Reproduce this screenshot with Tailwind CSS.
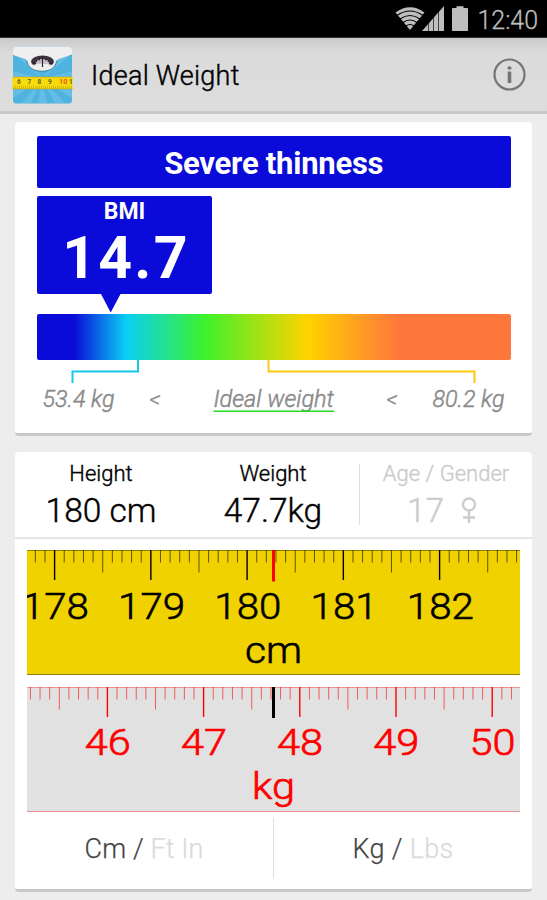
<!DOCTYPE html>
<html lang="en">
<head>
  <meta charset="UTF-8">
  <title>Ideal Weight</title>
  <meta name="viewport" content="width=device-width, initial-scale=1.0">
  <script src="https://cdn.jsdelivr.net/npm/@tailwindcss/browser@4"></script>
</head>
<body class="bg-[#ededed] font-['Roboto',sans-serif] w-[547px] h-[900px] overflow-hidden text-black">

  <!-- Status bar -->
  <div class="h-[38px] bg-black border-b border-[#333] flex justify-end">
    <svg class="w-[167px] h-[37px]" viewBox="0 0 167 37" fill="#bebebe">
      <path d="M15.500 12.500 Q30 2 44.500 12.500 L30 30 Z"/>
      <g fill="none" stroke="#000" stroke-width="1.200">
        <path d="M17 15.500Q30 6.500 43 15.500"/>
        <path d="M20 19Q30 12 40 19"/>
        <path d="M23 22.500Q30 17.500 37 22.500"/>
        <path d="M26 26Q30 23 34 26"/>
      </g>
      <path d="M42 31L64 6V31Z"/>
      <path d="M48.500 20V31M53.500 15V31M58.500 10V31" stroke="#000" stroke-width="1" opacity=".65"/>
      <path d="M72 9Q72 8 73 8H76.500V6.300H83.500V8H87Q88 8 88 9V31H72Z"/>
      <text x="97.500" y="28.500" font-size="25.500" font-weight="300" stroke="#bebebe" stroke-width=".3" textLength="60.500" lengthAdjust="spacingAndGlyphs">12:40</text>
    </svg>
  </div>

  <!-- Action bar -->
  <header class="h-[76px] bg-linear-to-b from-[#cacaca] via-[#dbdbdb] via-20% to-[#dddddd] border-b-3 border-[#c8c8c8] flex items-center justify-between pl-3 pr-[21px]">
    <div class="flex items-center">
      <svg class="w-[61px] h-[58px] mt-px" viewBox="0 0 61 58">
        <rect x="1" y=".5" width="59" height="57" rx="3.500" fill="#4fb3df"/>
        <g fill="#70c3e8" opacity=".65">
          <path d="M30 33L1 25V34ZM30 33L1 43V52ZM30 33L10 57H19ZM30 33L26 57H35ZM30 33L43 57H53ZM30 33L60 43V52ZM30 33L60 25V34ZM30 33L5 10H14ZM30 33L48 10H57Z"/>
        </g>
        <path d="M1 9Q12 9 15 15C15.500 21 21 25.200 30 25.200C39 25.200 44 21 44.500 15Q48 9 60 8.500" fill="#efefef" stroke="#30799b" stroke-width=".9"/>
        <path d="M1 9V4Q1 .5 4.500 .5H56.500Q60 .5 60 4V8.500L44 14H16Z" fill="#efefef"/>
        <path d="M1 9Q12 9 15 15L17 12ZM60 8.500Q48 9 44.500 15L43 12Z" fill="#efefef"/>
        <ellipse cx="30.500" cy="15.500" rx="11.500" ry="6" fill="#3d3640"/>
        <path d="M21 18Q30 8 40 18L38 20Q30 14 23 20Z" fill="#c8bfc8"/>
        <path d="M21 20Q30 14 40 20L37 23H24Z" fill="#eee"/>
        <path d="M30.500 10V21M25 16L23.500 13.500M36 16L37.500 13.500M27.500 14.500L27 12M33.500 14.500L34 12" stroke="#2b2430" stroke-width="1.200"/>
        <circle cx="22.500" cy="17" r="1.600" fill="#2b2430"/><circle cx="38.500" cy="17" r="1.600" fill="#2b2430"/>
        <rect x=".5" y="31" width="60" height="12" fill="#f7dc0d"/>
        <path d="M.5 31.200H60.500" stroke="#d9a900" stroke-width=".7"/>
        <path d="M.5 42.800H60.500" stroke="#c8aa10" stroke-width=".8"/>
        <path d="M1 41H60" stroke="#8f7c10" stroke-width="2.500" stroke-dasharray=".6 1.400" opacity=".6"/>
        <g font-size="6.500" font-weight="700" fill="#6b5c12">
          <text x="5" y="38">6</text><text x="15.500" y="38">7</text><text x="25.500" y="38">8</text><text x="36" y="38">9</text>
          <text x="47" y="38" fill="#ee5a10" font-size="7.500">10</text><text x="57" y="38">1</text>
        </g>
      </svg>
      <h1 class="ml-[18px] mt-0.5 text-[27px] leading-8 tracking-[0.25px] font-light [-webkit-text-stroke:0.4px_#000]">Ideal Weight</h1>
    </div>
    <svg class="w-[33px] h-[33px]" viewBox="0 0 33 33">
      <circle cx="16.500" cy="16.500" r="15" fill="none" stroke="#757575" stroke-width="2.200"/>
      <path d="M14.700 13.500H18.300V25H14.700Z" fill="#757575"/>
      <ellipse cx="16.500" cy="10" rx="2.100" ry="1.700" fill="#757575"/>
    </svg>
  </header>

  <main class="pl-[15px] pr-[15px] pt-2 flex flex-col gap-4">

    <!-- BMI card -->
    <section class="w-[517px] h-[314px] bg-white rounded-[4px] border-b-3 border-[#c8c8c8] px-[22px] pt-[13.5px]">
      <div class="w-[473.5px] h-[52.5px] bg-[#0a0bd8] rounded-[2px] text-white text-[31px] font-bold flex items-center justify-center pt-1">
        <span class="tracking-[-0.25px]">Severe thinness</span>
      </div>
      <div class="relative mt-2 w-[175px] h-[98px] bg-[#0a0bd8] rounded-[2px] text-white font-bold text-center">
        <div class="text-[23px] leading-[31px]">BMI</div>
        <div class="text-[59px] leading-[62px] tracking-[2.2px] pl-[3px]">14.7</div>
        <svg class="absolute left-16 top-[98px] w-5 h-[19px]" viewBox="0 0 20 19"><path d="M0 0H19.500L9.700 18.500Z" fill="#0a0bd8"/></svg>
      </div>
      <div class="mt-[19.5px] w-[473.5px] h-[46.5px] rounded-[2px] bg-[linear-gradient(to_right,#0a0bd8_0px,#0a0bd8_37px,#0acff6_89px,#3df22b_168px,#ffd300_270px,#ff783b_360px)]"></div>
      <svg class="w-[474px] h-6" viewBox="0 0 474 24" fill="none" stroke-width="2">
        <path d="M101 0V11.500H35.500V23" stroke="#12c9ea"/>
        <path d="M231.500 0V11.500H437.500V23" stroke="#ffc912"/>
      </svg>
      <!-- Ideal range -->
      <svg class="w-[474px] h-8" viewBox="0 0 474 32" fill="#8a8a8a" font-size="24" font-style="italic" font-weight="300" stroke="#8a8a8a" stroke-width=".5">
        <text x="5.500" y="23" textLength="72" lengthAdjust="spacingAndGlyphs">53.4 kg</text>
        <text x="112.500" y="22.500" font-size="22">&lt;</text>
        <text x="176.500" y="23" textLength="120.500" lengthAdjust="spacingAndGlyphs">Ideal weight</text>
        <path d="M176.500 27.200H297" stroke="#1fdc1f" stroke-width="1.600"/>
        <text x="349.500" y="22.500" font-size="22">&lt;</text>
        <text x="395.500" y="23" textLength="72" lengthAdjust="spacingAndGlyphs">80.2 kg</text>
      </svg>
    </section>

    <!-- Measurements card -->
    <section class="w-[517px] h-[440px] bg-white rounded-[4px] border-b-3 border-[#c8c8c8]">
      <div class="h-[87px] border-b-2 border-[#e5e5e5] flex pt-3 font-light">
        <div class="w-[172px] text-center [-webkit-text-stroke:0.4px_#000]">
          <div class="text-[22px] leading-5">Height</div>
          <div class="text-[33.5px] leading-[34px] mt-2.5">180 cm</div>
        </div>
        <div class="w-[172px] text-center [-webkit-text-stroke:0.4px_#000]">
          <div class="text-[22px] leading-5">Weight</div>
          <div class="text-[33.5px] leading-[34px] mt-2.5">47.7kg</div>
        </div>
        <div class="w-px h-[61px] bg-[#ddd]"></div>
        <div class="w-[172px] text-center text-[#ccc] [-webkit-text-stroke:0.4px_#ccc]">
          <div class="text-[22px] leading-5">Age / Gender</div>
          <div class="flex items-center justify-center text-[33.5px] leading-[34px] mt-2.5 gap-[17px] pr-2">
            <span>17</span>
            <svg class="w-4 h-[26px] -mt-0.5" viewBox="0 0 16 26" fill="none" stroke="#ccc" stroke-width="2.400">
              <circle cx="8" cy="7.500" r="6"/><path d="M8 13.500V26M2 20.500H14"/>
            </svg>
          </div>
        </div>
      </div>

      <!-- Rulers -->
      <svg class="block ml-3 mt-[11px] w-[493px] h-[125px] bg-[#f0d200]" viewBox="0 0 493 125" font-weight="300">
        <g id="cm-ticks" stroke="#000"></g>
        <path d="M0 .5H493M0 124.500H493" stroke="#000" stroke-opacity=".4"/>
        <rect x="245" y="0" width="3" height="31.500" fill="#f00"/>
        <g id="cm-labels" font-size="37.500" stroke="#000" stroke-width=".6"></g>
        <text x="246.500" y="112.500" font-size="37.500" stroke="#000" stroke-width=".6" text-anchor="middle" textLength="57" lengthAdjust="spacingAndGlyphs">cm</text>
      </svg>
      <svg class="block ml-3 mt-3 w-[493px] h-[125px] bg-[#e1e1e1]" viewBox="0 0 493 125" fill="#f00" font-weight="300">
        <g id="kg-ticks" stroke="#f00"></g>
        <path d="M0 .5H493M0 124.500H493" stroke="#f00" stroke-opacity=".35"/>
        <rect x="245" y="0" width="3" height="31" fill="#000"/>
        <g id="kg-labels" font-size="37.500" stroke="#f00" stroke-width=".7"></g>
        <text x="246.500" y="112" font-size="37.500" stroke="#f00" stroke-width=".7" text-anchor="middle" textLength="43" lengthAdjust="spacingAndGlyphs">kg</text>
      </svg>

      <!-- Unit switches -->
      <div class="flex items-center h-[61px] mt-1.5 text-[27px] text-[#444] font-light">
        <div class="w-[258px] text-center pt-0.5 [-webkit-text-stroke:0.25px] tracking-[0.1px]">Cm / <span class="text-[#dadada]">Ft In</span></div>
        <div class="w-px h-[61px] bg-[#ddd]"></div>
        <div class="w-[258px] text-center pt-0.5 [-webkit-text-stroke:0.25px] tracking-[0.3px]">Kg / <span class="text-[#dadada]">Lbs</span></div>
      </div>
    </section>
  </main>

  <script>
    // Draws ticks every tenth of a unit and a label on each whole unit
    function drawRuler(id, firstX, firstValue, step, labelWidth, labelY, shift) {
      let ticks = '', labels = '';
      for (let i = -10; i < 50; i++) {
        const x = firstX + i * step / 10;
        if (x < 1 || x > 492) continue;
        const major = i % 10 === 0;
        const height = major ? 30 : i % 5 === 0 ? 22.5 : 12.5;
        ticks += `<path d="M${x} 0V${height}" stroke-width="${major ? 1.4 : 1}" stroke-opacity="${major ? 1 : 0.6}"/>`;
        if (major) {
          labels += `<text x="${x + shift}" y="${labelY}" text-anchor="middle" textLength="${labelWidth}" lengthAdjust="spacingAndGlyphs">${firstValue + i / 10}</text>`;
        }
      }
      document.getElementById(id + '-ticks').innerHTML = ticks;
      document.getElementById(id + '-labels').innerHTML = labels;
    }
    drawRuler('cm', 27.6, 178, 96.25, 67, 68.5, 0.7);
    drawRuler('kg', 80.4, 46, 96.2, 46, 68, 0.3);
  </script>
</body>
</html>
